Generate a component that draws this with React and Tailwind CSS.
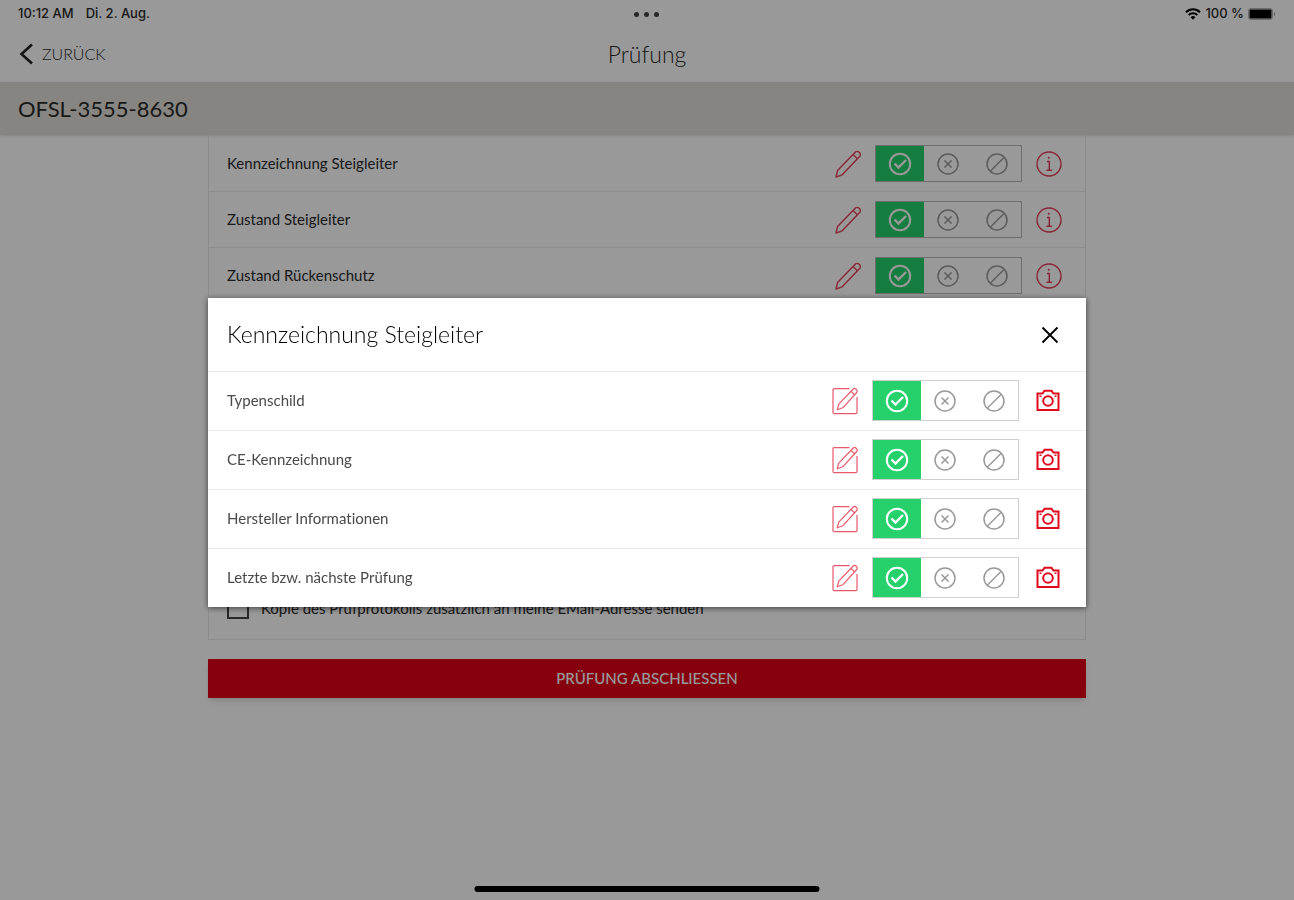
import { useState } from "react";

const inspections = ["Kennzeichnung Steigleiter", "Zustand Steigleiter", "Zustand Rückenschutz"];

const details = [
  "Typenschild",
  "CE-Kennzeichnung",
  "Hersteller Informationen",
  "Letzte bzw. nächste Prüfung",
];

function PencilIcon() {
  return (
    <svg viewBox="0 0 26 28" className="h-7 w-[26px]" fill="none" stroke="currentColor" strokeWidth="1.4" strokeLinejoin="round" aria-hidden="true">
      <path d="M1 27 2.6 20.6 20.2 2.2a2.6 2.6 0 0 1 3.8 0l.6.6a2.6 2.6 0 0 1 0 3.7L7.2 24.8Z" />
      <path d="M18 4.600l4.500 4.200" />
    </svg>
  );
}

function EditIcon() {
  return (
    <svg viewBox="0 0 26 28" className="h-7 w-[26px]" fill="none" stroke="currentColor" strokeWidth="1.2" strokeLinejoin="round" aria-hidden="true">
      <path d="M17.500 1.600H2.200A1.200 1.200 0 0 0 1 2.800V25.500a1.200 1.200 0 0 0 1.200 1.200H23.800A1.200 1.200 0 0 0 25 25.500V10" />
      <path d="M5.200 22.800 6.800 17.200 21.200 2a1.900 1.900 0 0 1 2.700 0l.8.8a1.900 1.900 0 0 1 0 2.700L10.700 20.800Z" />
      <path d="m19 4.400 3.500 3.400" />
    </svg>
  );
}

function CheckIcon() {
  return (
    <svg viewBox="0 0 24 24" className="size-6" fill="none" stroke="currentColor" strokeWidth="2" aria-hidden="true">
      <circle cx="12" cy="12" r="10.200" />
      <path d="m6.500 11.500 4 4 7.500-7.500" strokeWidth="2.400" />
    </svg>
  );
}

function CrossIcon() {
  return (
    <svg viewBox="0 0 24 24" className="size-6" fill="none" stroke="currentColor" strokeWidth="1.500" aria-hidden="true">
      <circle cx="12" cy="12" r="10" />
      <path d="m8.500 8.500 7 7m0-7-7 7" />
    </svg>
  );
}

function SlashIcon() {
  return (
    <svg viewBox="0 0 24 24" className="size-6" fill="none" stroke="currentColor" strokeWidth="1.500" aria-hidden="true">
      <circle cx="12" cy="12" r="10" />
      <path d="M5.500 19 19 5.500" />
    </svg>
  );
}

function InfoIcon() {
  return (
    <svg viewBox="0 0 26 26" className="size-[26px]" fill="none" stroke="currentColor" strokeWidth="1.400" aria-hidden="true">
      <circle cx="13" cy="13" r="12" />
      <path d="M11 10.500h2.300V19M10.500 19.300h5.500" />
      <circle cx="12.800" cy="6.800" r="1" fill="currentColor" stroke="none" />
    </svg>
  );
}

function CameraIcon() {
  return (
    <svg viewBox="0 0 24 24" className="size-6" fill="none" stroke="currentColor" strokeWidth="2" aria-hidden="true">
      <path d="M1.500 4.500H6.500L8.500 1.800h7l2 2.700h5v16.500h-21Z" />
      <circle cx="12" cy="12" r="4.800" />
      <path d="M3.500 7.300h2M18.500 7.300h2" strokeWidth="1.400" />
    </svg>
  );
}

function WifiIcon() {
  return (
    <svg viewBox="0 0 16 12" className="h-3 w-4" fill="none" stroke="currentColor" strokeWidth="2" aria-hidden="true">
      <path d="M1 4.200a10 10 0 0 1 14 0M3.700 7a6.200 6.200 0 0 1 8.600 0" />
      <path d="M8 11.800 5.600 9.200a3.500 3.500 0 0 1 4.800 0Z" fill="currentColor" stroke="none" />
    </svg>
  );
}

function BatteryIcon() {
  return (
    <svg viewBox="0 0 28 12" className="h-3 w-7" aria-hidden="true">
      <rect x=".5" y=".5" width="24" height="11" rx="2.500" fill="none" stroke="currentColor" strokeOpacity=".3" />
      <rect x="1.500" y="1.500" width="22" height="9" rx="1" fill="currentColor" />
      <path d="M26 4c1.500.5 1.500 3.500 0 4Z" fill="currentColor" fillOpacity=".4" />
    </svg>
  );
}

const states = [
  ["In Ordnung", CheckIcon],
  ["Mangel", CrossIcon],
  ["Nicht relevant", SlashIcon],
];

function StateSwitch({ label, tall }) {
  const [active, setActive] = useState(0);
  return (
    <div
      role="group"
      aria-label={label}
      className={`grid w-[147px] shrink-0 grid-cols-3 border ${tall ? "h-[41px] border-[#cfcfcf]" : "h-[37px] border-[#b8b8b8]"}`}
    >
      {states.map(([name, Icon], i) => (
        <button
          key={name}
          type="button"
          aria-label={name}
          aria-pressed={active === i}
          onClick={() => setActive(i)}
          className={`flex items-center justify-center ${active === i ? "bg-[#26d06b] text-white" : "text-[#999]"}`}
        >
          <Icon />
        </button>
      ))}
    </div>
  );
}

function InspectionRow({ label }) {
  return (
    <li className="flex h-14 items-center gap-[14px] border-b border-[#e9e9e9] pr-[23px] pl-[18px]">
      <span className="min-w-0 flex-1 truncate text-[15px]">{label}</span>
      <button type="button" aria-label={`${label} bearbeiten`} className="text-[#e2405a]">
        <PencilIcon />
      </button>
      <StateSwitch label={label} />
      <button type="button" aria-label={`${label} Info`} className="text-[#e2405a]">
        <InfoIcon />
      </button>
    </li>
  );
}

function DetailRow({ label }) {
  return (
    <li className="flex h-[59px] items-center gap-[14px] border-t border-[#ececec] pr-[23px] pb-px pl-[19px]">
      <span className="min-w-0 flex-1 truncate text-[15px] text-[#4a4a4a]">{label}</span>
      <button type="button" aria-label={`${label} bearbeiten`} className="text-[#e8596b]">
        <EditIcon />
      </button>
      <StateSwitch label={label} tall />
      <button type="button" aria-label={`${label} Foto`} className="flex w-[30px] justify-center text-[#e00a1e]">
        <CameraIcon />
      </button>
    </li>
  );
}

export default function App() {
  return (
    <div className="relative flex min-h-screen flex-col bg-white font-['Lato',sans-serif] text-[#2a2a2a] [font-variant-ligatures:no-common-ligatures]">
      <div className="grid h-7 grid-cols-3 items-center px-[18px] font-['Inter',sans-serif] text-[13px] font-medium">
        <div className="flex gap-3">
          <span>10:12 AM</span>
          <span>Di. 2. Aug.</span>
        </div>
        <div className="flex justify-center gap-[5px]">
          <span className="size-[5px] rounded-full bg-[#444]" />
          <span className="size-[5px] rounded-full bg-[#444]" />
          <span className="size-[5px] rounded-full bg-[#444]" />
        </div>
        <div className="flex items-center justify-end gap-1 text-black">
          <WifiIcon />
          <span className="text-[#2a2a2a]">100 %</span>
          <BatteryIcon />
        </div>
      </div>

      <header className="grid h-[54px] grid-cols-3 items-center px-[18px] pb-0.5 font-light">
        <a href="#zurueck" className="flex items-center gap-2 text-base">
          <svg viewBox="0 0 16 22" className="h-[22px] w-4" fill="none" stroke="#222" strokeWidth="2.600" aria-hidden="true">
            <path d="M14 1.500 3.500 11 14 20.500" />
          </svg>
          ZURÜCK
        </a>
        <h1 className="text-center text-[23px]">Prüfung</h1>
      </header>

      <div className="flex h-[53px] items-center bg-[#e1ded8] px-[18px] text-[22px] shadow-sm">
        OFSL-3555-8630
      </div>

      <main className="mx-auto w-full max-w-[878px]">
        <div className="border border-[#e9e9e9]">
          <ul>
            {inspections.map((label) => (
              <InspectionRow key={label} label={label} />
            ))}
          </ul>
          <label className="flex items-center gap-3 px-[18px] pt-[293px] pb-[19px] text-[15px]">
            <input type="checkbox" className="size-[22px] appearance-none border-2 border-[#444] bg-white" />
            Kopie des Prüfprotokolls zusätzlich an meine EMail-Adresse senden
          </label>
        </div>
        <button type="button" className="mt-[19px] h-[39px] w-full bg-[#df0017] text-[15px] font-medium text-white shadow-md">
          PRÜFUNG ABSCHLIESSEN
        </button>
      </main>

      <div className="fixed inset-0 flex items-center justify-center bg-black/40 pt-[5px]">
        <section
          role="dialog"
          aria-modal="true"
          aria-labelledby="dialog-title"
          className="w-full max-w-[878px] bg-white shadow-[0_1px_6px_rgba(0,0,0,0.6)]"
        >
          <div className="flex h-[73px] items-center justify-between pr-[27px] pl-[19px]">
            <h2 id="dialog-title" className="text-[23px] font-light text-black">Kennzeichnung Steigleiter</h2>
            <button type="button" aria-label="Schließen" className="text-black">
              <svg viewBox="0 0 18 18" className="size-[18px]" fill="none" stroke="currentColor" strokeWidth="1.900" aria-hidden="true">
                <path d="m1.500 1.500 15 15m0-15-15 15" />
              </svg>
            </button>
          </div>
          <ul>
            {details.map((label) => (
              <DetailRow key={label} label={label} />
            ))}
          </ul>
        </section>
        <div className="absolute bottom-2 left-1/2 h-[6px] w-[345px] -translate-x-1/2 rounded-full bg-black" />
      </div>
    </div>
  );
}
